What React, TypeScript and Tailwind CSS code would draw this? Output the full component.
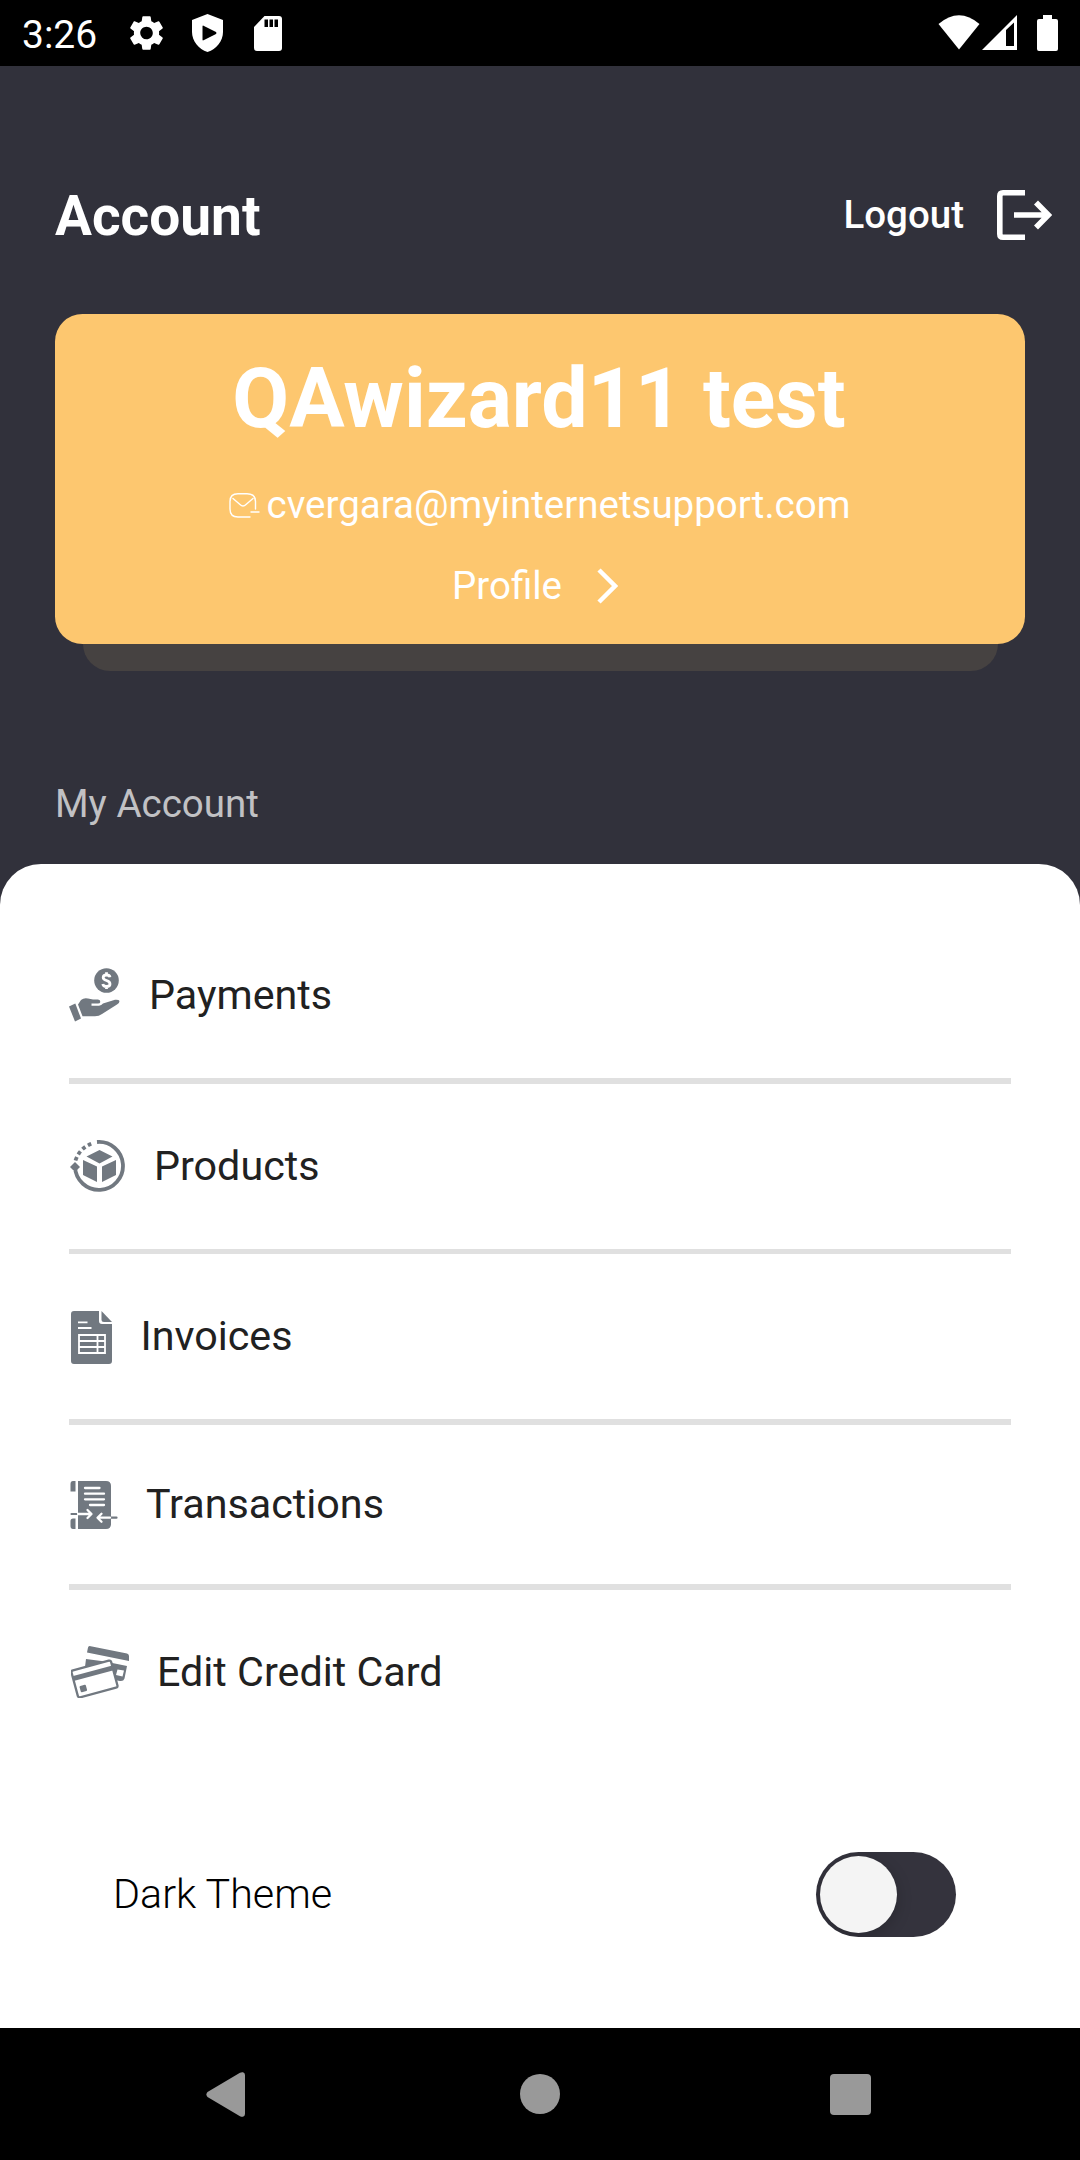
import type { ReactNode } from "react";

const iconColor = "#717880";

function SettingsIcon() {
  return (
    <svg width="35" height="36" viewBox="2 2 20 20" fill="#fff">
      <path d="M19.14 12.94c.04-.3.06-.61.06-.94 0-.32-.02-.64-.07-.94l2.03-1.58a.49.49 0 0 0 .12-.61l-1.92-3.32a.488.488 0 0 0-.59-.22l-2.39.96c-.5-.38-1.03-.7-1.62-.94l-.36-2.54a.484.484 0 0 0-.48-.41h-3.84c-.24 0-.43.17-.47.41l-.36 2.54c-.59.24-1.13.57-1.62.94l-2.39-.96c-.22-.08-.47 0-.59.22L2.74 8.87c-.12.21-.08.47.12.61l2.03 1.58c-.05.3-.09.63-.09.94s.02.64.07.94l-2.03 1.58a.49.49 0 0 0-.12.61l1.92 3.32c.12.22.37.29.59.22l2.39-.96c.5.38 1.03.7 1.62.94l.36 2.54c.05.24.24.41.48.41h3.84c.24 0 .44-.17.47-.41l.36-2.54c.59-.24 1.13-.56 1.62-.94l2.39.96c.22.08.47 0 .59-.22l1.92-3.32a.48.48 0 0 0-.12-.61l-2.01-1.58zM12 15.6A3.61 3.61 0 0 1 8.4 12c0-1.98 1.62-3.6 3.6-3.6s3.6 1.62 3.6 3.6-1.62 3.6-3.6 3.6z" />
    </svg>
  );
}

function ShieldIcon() {
  return (
    <svg width="32" height="38" viewBox="0 0 32 38" fill="#fff">
      <path fillRule="evenodd" d="M16.500 0 32 6V18C32 27 25.500 35 16.500 38 7.500 35 1 27 1 18V6ZM11.500 12.500V25.500Q11.500 27 13 26L25 19.900Q26 19 25 18.100L13 12Q11.500 11 11.500 12.500Z" />
    </svg>
  );
}

function SdCardIcon() {
  return (
    <svg width="28" height="35" viewBox="0 0 28 35">
      <path fill="#fff" d="M10.5 0H25Q28 0 28 3V32Q28 35 25 35H3Q0 35 0 32V11Z" />
      <path fill="#000" d="M10.5 3.5h3.5V11h-3.5zM15.5 3.5H19V11h-3.500zM20.5 3.5H24V11h-3.500z" />
    </svg>
  );
}

function StatusBar() {
  return (
    <div className="flex h-[66px] items-center bg-black pt-0.5 pr-[22px] pl-[22px]">
      <span className="mt-0.5 w-[107px] text-[39px] leading-none text-white">3:26</span>
      <div className="mb-0.5 flex items-center">
        <SettingsIcon />
        <span className="w-[27px]" />
        <ShieldIcon />
        <span className="w-[31px]" />
        <SdCardIcon />
      </div>
      <div className="mb-0.5 ml-auto flex items-start">
        <svg width="42" height="35" viewBox="0 0 42 35">
          <path fill="#fff" d="M0.5 9Q21-8.500 41.500 9L21 34.500Z" />
        </svg>
        <svg className="ml-[2px]" width="35" height="35" viewBox="0 0 35 35">
          <path fill="#fff" fillRule="evenodd" d="M0 35 35 0V35ZM24 15V31H32V7.500Z" />
        </svg>
        <svg className="ml-5" width="21" height="36" viewBox="0 0 21 36">
          <path fill="#fff" d="M6 0H15V4H19Q21 4 21 6V34Q21 36 19 36H2Q0 36 0 34V6Q0 4 2 4H6Z" />
        </svg>
      </div>
    </div>
  );
}

function LogoutIcon() {
  return (
    <svg className="mb-0.5" width="55" height="50" viewBox="0 0 55 50" fill="none" stroke="#fff">
      <path strokeWidth="5.600" d="M28 2.800H6Q2.800 2.800 2.800 6V44Q2.800 47.200 6 47.200H28" />
      <path strokeWidth="5.600" d="M17 25H50M39 12.500 51.300 25 39 37.500" />
    </svg>
  );
}

function MailIcon() {
  return (
    <svg width="31" height="25" viewBox="0 0 31 25" fill="none" stroke="#fff" strokeWidth="1.400" strokeLinecap="round">
      <path d="M21 24H9Q1 24 1 16V8.500Q1 .8 9 .8H18Q26.500.8 26.500 8.500V16M22 19H30M4 5.500 11 11.500Q14 14.500 17 11.500L24 5.500" />
    </svg>
  );
}

function PaymentsIcon() {
  return (
    <svg width="51" height="54" viewBox="0 0 51 54" fill={iconColor}>
      <circle cx="37.500" cy="12.500" r="12.300" />
      <path d="M41 9.200Q40.500 7 37.500 7 34.200 7 34.200 9.500 34.200 11.500 37.500 12.500 41 13.500 41 16 41 18.500 37.500 18.500 34.200 18.500 33.800 16M37.500 4.300V7M37.500 18.500V21" fill="none" stroke="#fff" strokeWidth="2.800" />
      <path d="M0 38.500 6.300 35.500 12 50.500 6 53.500Z" />
      <path d="M9 36.500 12 32Q15 29.500 19 30.500L24 31.500H29Q31.500 31.800 31.300 34 31 35.500 29 35.500H22.500V37.700H30Q32.500 37.500 34 35.500L46 31.800Q50 31.500 50.500 33 50.500 35 48 36.500L33 46Q30 48.300 26 48.300H13.500Z" />
    </svg>
  );
}

function ProductsIcon() {
  return (
    <svg width="55" height="52" viewBox="0 0 55 52" fill={iconColor}>
      <path d="M27 2A24 24 0 1 1 5 27" fill="none" stroke={iconColor} strokeWidth="3.800" />
      <path d="M5.500 20.500Q10 7 24 2.800" fill="none" stroke={iconColor} strokeWidth="3.800" strokeDasharray="3.700 3" strokeDashoffset="0" />
      <path d="M0 27 5 22 10 27 7 30H3Z" />
      <path d="M29.500 10 42.500 16.500 29.500 23.500 16.500 16.500ZM13 20 27 26.500V42L13 35ZM46 20 32 26.500V42L46 35Z" />
    </svg>
  );
}

function InvoicesIcon() {
  return (
    <svg className="mt-px" width="41" height="53" viewBox="0 0 41 53" fill={iconColor}>
      <path d="M3 0H28V10Q28 13 31 13H41V50Q41 53 38 53H3Q0 53 0 50V3Q0 0 3 0Z" />
      <path d="M30.500 0 41 11H33Q30.500 11 30.500 8.500Z" />
      <path d="M7 11.300H16.500M7 17H20.500M8 24H34V42H8ZM8 30H34M8 36H34M26.500 24V42" fill="none" stroke="#fff" strokeWidth="1.800" />
    </svg>
  );
}

function TransactionsIcon() {
  return (
    <svg className="mt-0.5" width="48" height="48" viewBox="0 0 48 48" fill={iconColor}>
      <path d="M8 0H36Q41 0 41 5V43Q41 48 36 48H8Z" />
      <path d="M3 0H5.500V10.500H.5V3Q.5 0 3 0ZM.5 40Q.5 37.500 3 37.500H5.500V48H3Q.5 48 .5 45Z" />
      <path d="M1.500 33H8M40 36.700H46.500" stroke={iconColor} strokeWidth="2.200" strokeLinecap="round" />
      <g fill="none" stroke="#fff" strokeWidth="2.300" strokeLinecap="round">
        <path d="M15 7H29.500M15 12.700H34M15 18.300H34M20 24H34" />
        <path strokeLinejoin="round" d="M8 33H21M17.500 29 21.500 33 17.500 37M40 36.700H28M31.500 32.700 27.500 36.700 31.500 40.700" />
      </g>
    </svg>
  );
}

function CreditCardIcon() {
  return (
    <svg width="58" height="52" viewBox="0 0 58 52" fill={iconColor}>
      <path d="M18.500 0 56 7.500Q58 8 58 10V15L16 6.500 17 1.500Q17.300 0 18.500 0Z" />
      <path fillRule="evenodd" d="M15 13 34 15.500 56 20 53.500 32.500Q52.500 35.500 49 35L38 33V18L14 21ZM46.500 23.500 45 29 51.500 30.500 53 24.500Z" />
      <g transform="rotate(-15 23.500 33)">
        <rect x="3" y="19" width="41" height="28" rx="2" fill="#fff" stroke={iconColor} strokeWidth="2.300" />
        <path d="M2.800 24.500H44.300V29.500H2.800Z" />
        <rect x="7" y="36" width="6.500" height="6.500" rx="1" />
      </g>
    </svg>
  );
}

function MenuRow({ icon, label, className }: { icon: ReactNode; label: string; className: string }) {
  return (
    <div className={`flex items-center ${className}`}>
      {icon}
      <span className="mt-px text-[41.25px] leading-none text-[#212121]">{label}</span>
    </div>
  );
}

function Divider() {
  return <div className="h-[5.5px] bg-[#e0e0e0]" />;
}

export default function App() {
  return (
    <div className="flex h-[2160px] w-[1080px] flex-col overflow-hidden bg-[#31313b] font-['Roboto',sans-serif] whitespace-nowrap">
      <StatusBar />

      <header className="mt-[110px] flex h-[79px] items-center justify-between pr-7 pl-[55px]">
        <h1 className="mt-0.5 text-[55px] leading-none font-bold text-white">Account</h1>
        <div className="flex items-center">
          <span className="text-[38.5px] leading-none font-medium text-white">Logout</span>
          <span className="w-[33px]" />
          <LogoutIcon />
        </div>
      </header>

      <section className="mt-[58.5px] px-[55px]">
        <div className="flex h-[330px] flex-col items-center rounded-[27.5px] bg-[#fdc76f] text-white">
          <div className="mt-[37.5px] mr-0.5 text-[82.5px] leading-[96px] font-bold">QAwizard11 test</div>
          <div className="mt-9 mr-px flex h-[45px] items-center gap-[7px] text-[38.5px]">
            <MailIcon />
            <span className="leading-none">cvergara@myinternetsupport.com</span>
          </div>
          <div className="mt-9 mr-2.5 flex h-[45px] items-center gap-[35px] text-[38.5px]">
            <span className="leading-none">Profile</span>
            <svg className="mb-0.5" width="21" height="36" viewBox="0 0 21 36" fill="none" stroke="#fff" strokeWidth="4.500">
              <path d="M2 2 18 18 2 34" />
            </svg>
          </div>
        </div>
        <div className="mx-[27.5px] h-[27.5px] rounded-b-[27.5px] bg-[#464241]" />
      </section>

      <h2 className="mt-[110px] ml-[55px] text-[38.5px] leading-[46px] text-[#c1c1c4]">My Account</h2>

      <main className="mt-[36.5px] flex flex-1 flex-col rounded-t-[41px] bg-white px-[69px] pt-[48.5px]">
        <MenuRow className="h-[166px] gap-[29px]" icon={<PaymentsIcon />} label="Payments" />
        <Divider />
        <MenuRow className="h-[165px] gap-[29px] pl-px" icon={<ProductsIcon />} label="Products" />
        <Divider />
        <MenuRow className="h-[165px] gap-[28.5px] pl-0.5" icon={<InvoicesIcon />} label="Invoices" />
        <Divider />
        <MenuRow className="h-[159.5px] gap-7 pl-px" icon={<TransactionsIcon />} label="Transactions" />
        <Divider />
        <MenuRow className="h-[165px] gap-7 pl-0.5" icon={<CreditCardIcon />} label="Edit Credit Card" />

        <div className="mt-[97px] flex h-[85px] items-center justify-between pr-[55px] pl-11">
          <span className="mt-0.5 text-[41.25px] leading-none font-light text-black">Dark Theme</span>
          <button className="flex h-[85px] w-[140px] items-center overflow-hidden rounded-full bg-[#34333d] pl-1">
            <span className="size-[77px] rounded-full bg-[#f4f4f4] shadow-[0_4px_16px_rgba(0,0,0,0.2)]" />
          </button>
        </div>
      </main>

      <nav className="flex h-[132px] items-center bg-black pl-[206px]">
        <svg width="39" height="45" viewBox="0 0 39 45" fill="#999">
          <path d="M34 .8Q35.500 0 37 .3 39 .8 39 3V42Q39 44.200 37 44.700 35.500 45 34 44.200L1.500 25Q-.7 22.500 1.500 20Z" />
        </svg>
        <span className="ml-[275px] size-10 rounded-full bg-[#999]" />
        <span className="ml-[270px] size-[41px] rounded-[4px] bg-[#999]" />
      </nav>
    </div>
  );
}
